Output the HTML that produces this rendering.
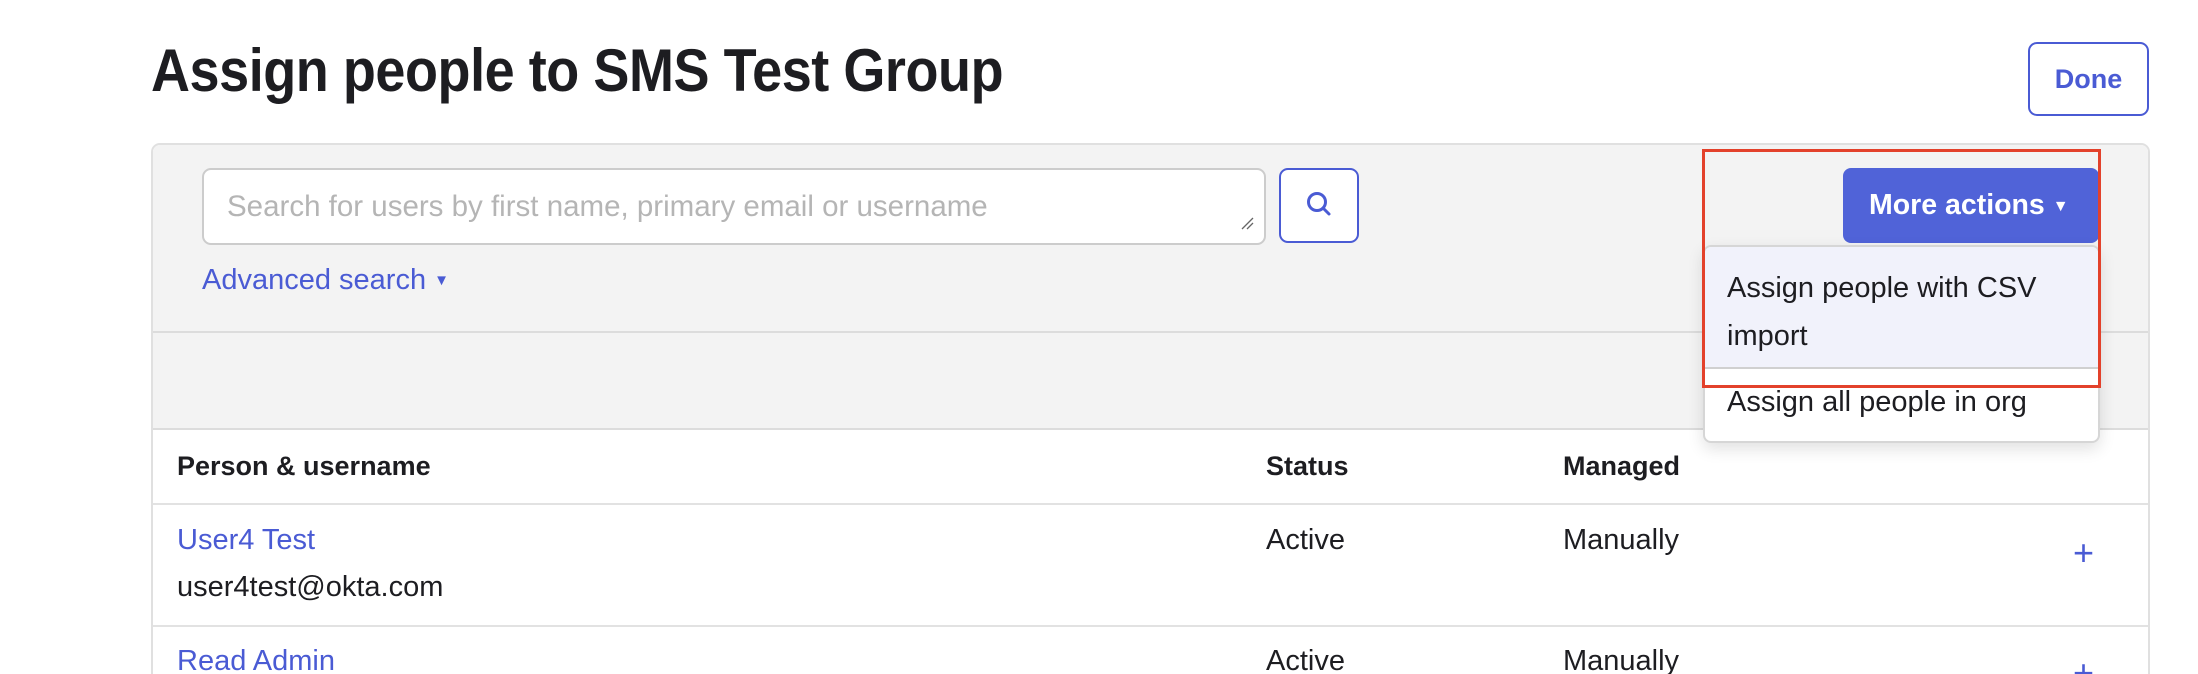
<!DOCTYPE html>
<html><head><meta charset="utf-8"><style>
html,body{margin:0;padding:0;width:2198px;height:674px;overflow:hidden;background:#fff}
#w{position:relative;width:2198px;height:674px;overflow:hidden;font-family:"Liberation Sans",sans-serif;color:#1d1d21}
.a{position:absolute;white-space:nowrap}
.blue{color:#4a5bd4}
</style></head><body><div id="w">
<div class="a" style="left:151px;top:33px;font-size:60px;font-weight:bold;line-height:76px;color:#1d1d21;transform:scaleX(0.9);transform-origin:left top;letter-spacing:-0.5px">Assign people to SMS Test Group</div>
<div class="a" style="left:2028px;top:42px;width:117px;height:70px;border:2px solid #4a5bd4;border-radius:9px;text-align:center;line-height:70px;font-size:27px;font-weight:bold;color:#4a5bd4">Done</div>

<div class="a" style="left:151px;top:143px;width:1995px;height:600px;border:2px solid #e0e0e0;border-radius:9px;overflow:hidden;background:#fff">
  <div style="position:absolute;left:0;top:0;width:100%;height:186px;background:#f3f3f3;border-bottom:2px solid #dcdcdc"></div>
  <div style="position:absolute;left:0;top:188px;width:100%;height:95px;background:#f3f3f3;border-bottom:2px solid #dcdcdc"></div>
  <div style="position:absolute;left:0;top:358px;width:100%;height:2px;background:#e2e2e2"></div>
  <div style="position:absolute;left:0;top:480px;width:100%;height:2px;background:#e2e2e2"></div>
</div>

<div class="a" style="left:202px;top:168px;width:1060px;height:73px;border:2px solid #ccc;border-radius:9px;background:#fff"></div>
<div class="a" style="left:227px;top:190px;font-size:29.5px;color:#b5b5b5">Search for users by first name, primary email or username</div>
<svg class="a" style="left:1240px;top:216px" width="14" height="14"><path d="M2 13L13 2M7 13L13 7" stroke="#666" stroke-width="1.3"/></svg>
<div class="a" style="left:1279px;top:168px;width:76px;height:71px;border:2px solid #4a5bd4;border-radius:9px;background:#fff"></div>
<svg class="a" style="left:1304px;top:189px" width="30" height="30"><circle cx="13" cy="13" r="8.5" fill="none" stroke="#4a5bd4" stroke-width="3"/><path d="M19 19L25 25" stroke="#4a5bd4" stroke-width="3" stroke-linecap="round"/></svg>
<div class="a blue" style="left:202px;top:264px;font-size:29px">Advanced search <span style="font-size:15px;vertical-align:4px">&#9660;</span></div>

<div class="a" style="left:1843px;top:168px;width:256px;height:75px;background:#5063d8;border-radius:8px;color:#fff;font-size:28.5px;font-weight:bold;line-height:75px;text-indent:26px">More actions <span style="font-size:16px;vertical-align:3px">&#9660;</span></div>
<div class="a" style="left:1703px;top:245px;width:393px;height:194px;border:2px solid #d6d6d6;border-radius:8px;background:#fff;box-shadow:0 6px 16px rgba(0,0,0,.12);overflow:hidden">
  <div style="height:120px;background:#f1f2fb;border-bottom:2px solid #d0d0d0"></div>
</div>
<div class="a" style="left:1727px;top:264px;font-size:29px;line-height:48px">Assign people with CSV<br>import</div>
<div class="a" style="left:1727px;top:386px;font-size:29px">Assign all people in org</div>
<div class="a" style="left:1702px;top:149px;width:393px;height:233px;border:3px solid #e3412b"></div>

<div class="a" style="left:177px;top:451px;font-size:27px;font-weight:bold">Person &amp; username</div>
<div class="a" style="left:1266px;top:451px;font-size:27px;font-weight:bold">Status</div>
<div class="a" style="left:1563px;top:451px;font-size:27px;font-weight:bold">Managed</div>

<div class="a blue" style="left:177px;top:524px;font-size:29px">User4 Test</div>
<div class="a" style="left:177px;top:571px;font-size:29px">user4test@okta.com</div>
<div class="a" style="left:1266px;top:524px;font-size:29px">Active</div>
<div class="a" style="left:1563px;top:524px;font-size:29px">Manually</div>
<div class="a blue" style="left:2073px;top:532px;font-size:36px;font-weight:300">+</div>

<div class="a blue" style="left:177px;top:645px;font-size:29px">Read Admin</div>
<div class="a" style="left:1266px;top:645px;font-size:29px">Active</div>
<div class="a" style="left:1563px;top:645px;font-size:29px">Manually</div>
<div class="a blue" style="left:2073px;top:652px;font-size:36px;font-weight:300">+</div>
</div></body></html>
